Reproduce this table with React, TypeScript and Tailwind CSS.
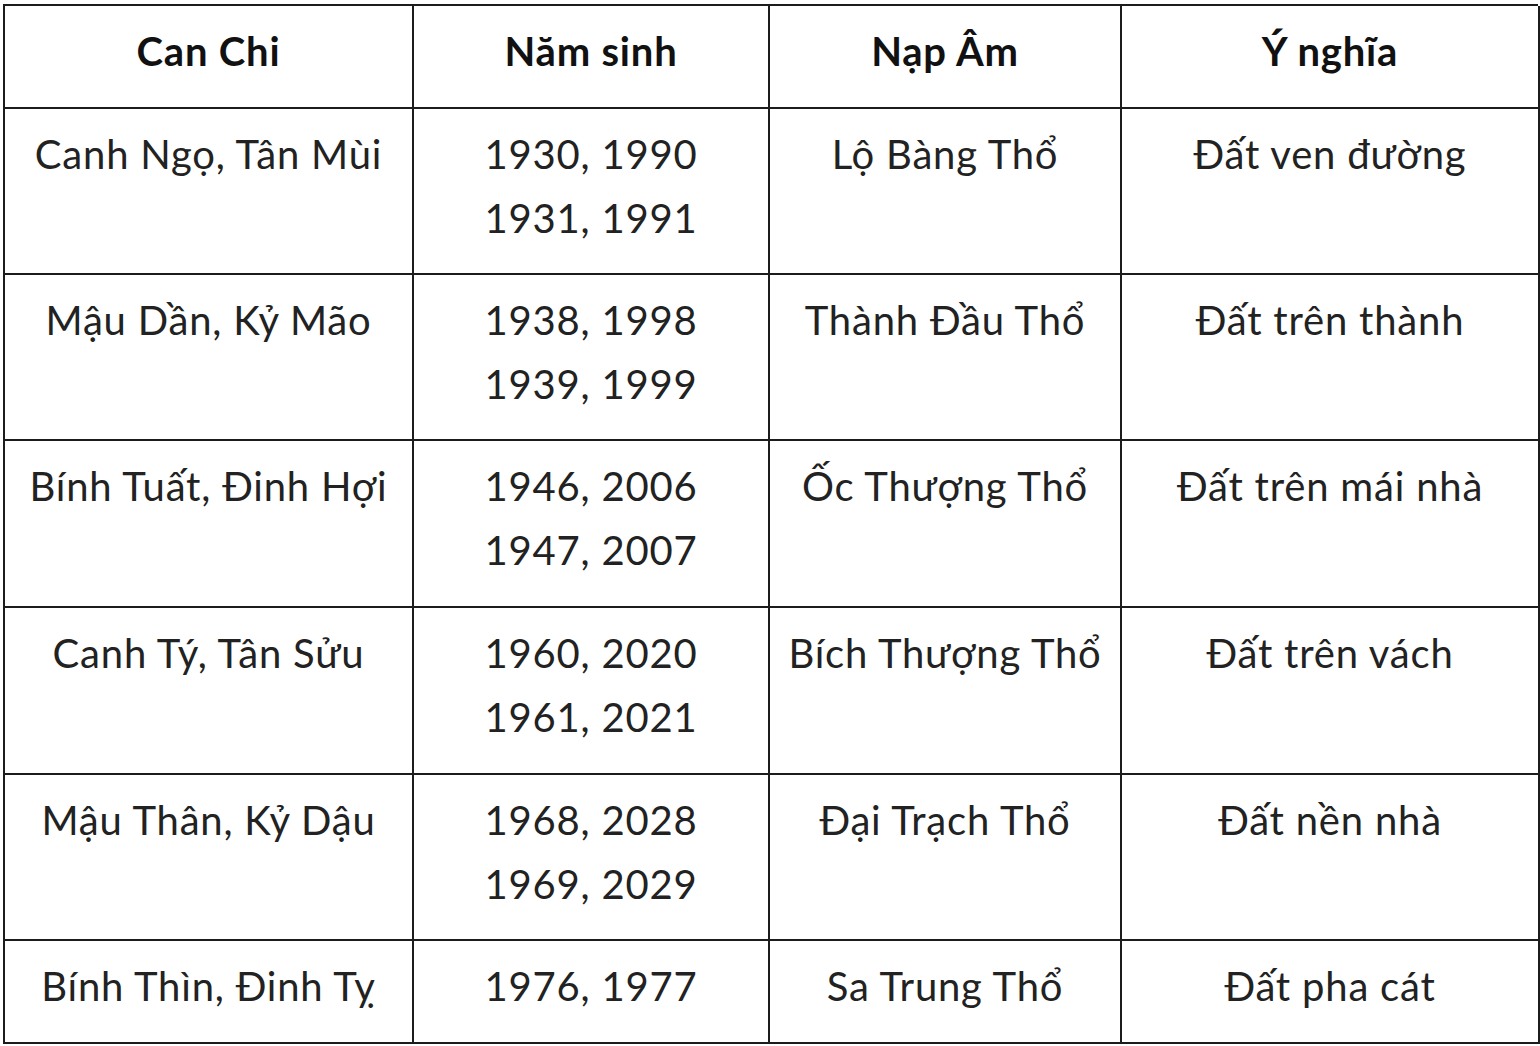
const rows = [
  ["Canh Ngọ, Tân Mùi", ["1930, 1990", "1931, 1991"], "Lộ Bàng Thổ", "Đất ven đường"],
  ["Mậu Dần, Kỷ Mão", ["1938, 1998", "1939, 1999"], "Thành Đầu Thổ", "Đất trên thành"],
  ["Bính Tuất, Đinh Hợi", ["1946, 2006", "1947, 2007"], "Ốc Thượng Thổ", "Đất trên mái nhà"],
  ["Canh Tý, Tân Sửu", ["1960, 2020", "1961, 2021"], "Bích Thượng Thổ", "Đất trên vách"],
  ["Mậu Thân, Kỷ Dậu", ["1968, 2028", "1969, 2029"], "Đại Trạch Thổ", "Đất nền nhà"],
  ["Bính Thìn, Đinh Tỵ", ["1976, 1977"], "Sa Trung Thổ", "Đất pha cát"],
];

const headers = ["Can Chi", "Năm sinh", "Nạp Âm", "Ý nghĩa"];

// rows in the source drift by a pixel here and there
const tallRows = [2, 3, 5];

const cell = "border-r-2 border-b-2 border-[#1c1c1c] pt-[13px] text-center leading-[64px]";

export default function App() {
  return (
    <div className="min-h-screen bg-white pl-[3px] pt-[4px] font-['Lato',sans-serif] text-[40px] tracking-[0.8px] text-[#222]">
      <div className="grid w-[1535px] grid-cols-[409px_356px_352px_418px] border-t-2 border-l-2 border-[#1c1c1c]">
        {headers.map((h) => (
          <div key={h} className={`${cell} pb-[24px] font-bold text-[#111]`}>
            {h}
          </div>
        ))}
        {rows.map(([canChi, years, napAm, meaning], i) => {
          const pb = tallRows.includes(i) ? "pb-[24px]" : "pb-[23px]";
          return (
            <div key={canChi as string} className="contents">
              <div className={`${cell} ${pb}`}>{canChi}</div>
              <div className={`${cell} ${pb}`}>
                {(years as string[]).map((y) => (
                  <div key={y}>{y}</div>
                ))}
              </div>
              <div className={`${cell} ${pb}`}>{napAm}</div>
              <div className={`${cell} ${pb}`}>{meaning}</div>
            </div>
          );
        })}
      </div>
    </div>
  );
}
